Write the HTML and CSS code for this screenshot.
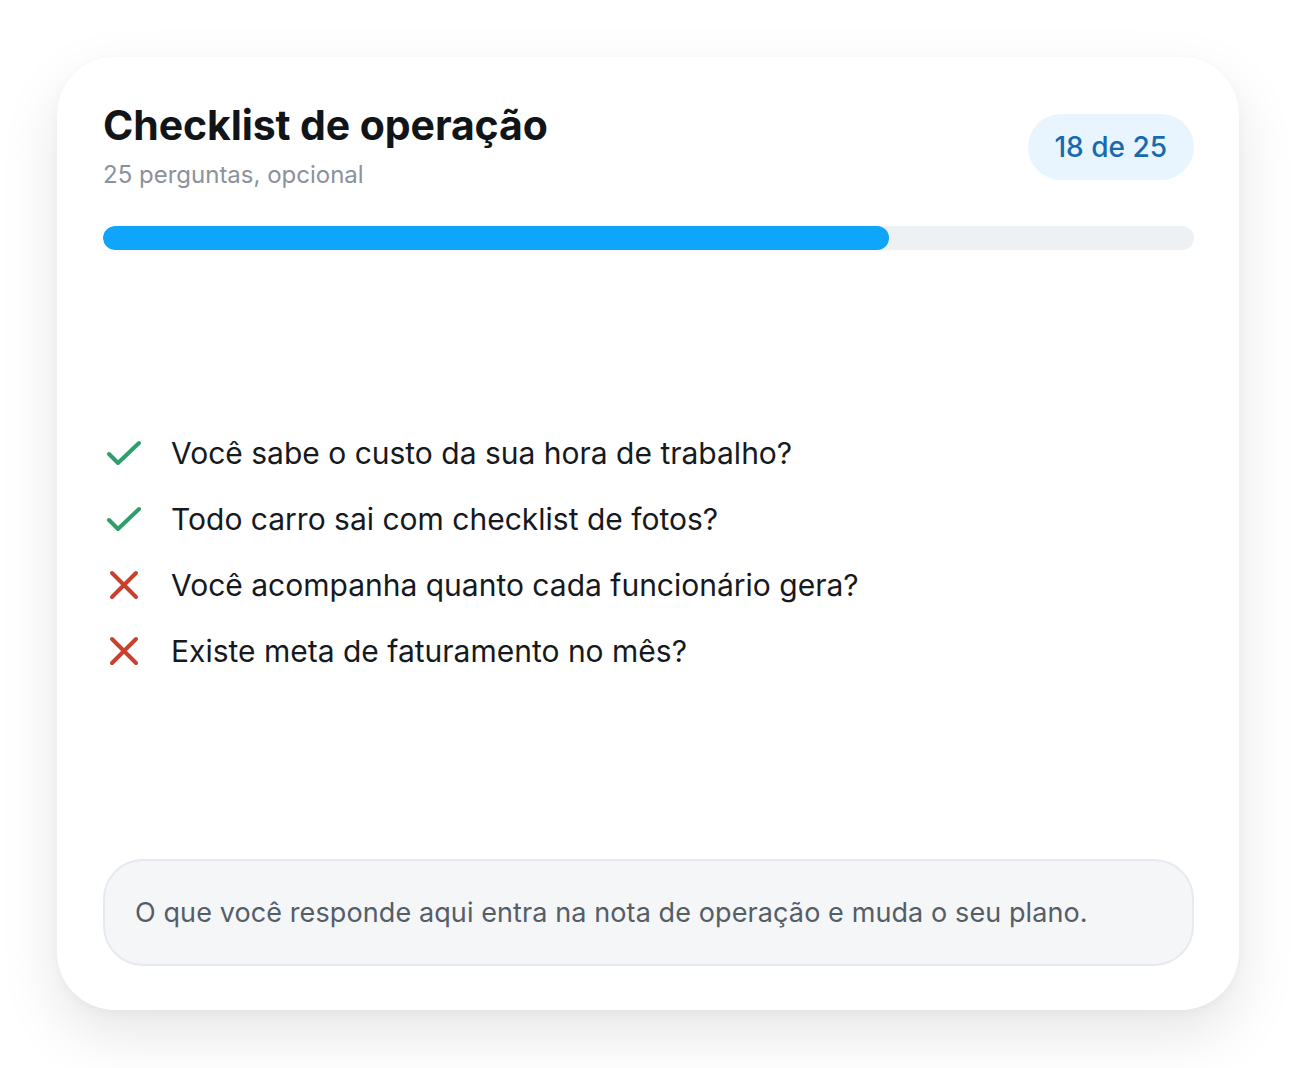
FILE: index.html
```html
<!DOCTYPE html>
<html lang="pt-BR">
<head>
<meta charset="utf-8">
<title>Checklist de operação</title>
<link rel="stylesheet" href="styles.css">
</head>
<body>
<div class="page">
  <section class="card">
    <header class="card-head">
      <div class="titles">
        <h1 class="title">Checklist de operação</h1>
        <p class="subtitle">25 perguntas, opcional</p>
      </div>
      <span class="badge">18 de 25</span>
    </header>
    <div class="progress"><div class="progress-fill" style="width:72%"></div></div>
    <ul class="list">
      <li class="item">
        <svg class="icon" viewBox="0 0 36 36"><path class="ok" d="M3 19 L12 28 L33 8"/></svg>
        <span>Você sabe o custo da sua hora de trabalho?</span>
      </li>
      <li class="item">
        <svg class="icon" viewBox="0 0 36 36"><path class="ok" d="M3 19 L12 28 L33 8"/></svg>
        <span>Todo carro sai com checklist de fotos?</span>
      </li>
      <li class="item">
        <svg class="icon" viewBox="0 0 36 36"><path class="no" d="M6 6 L30 30 M30 6 L6 30"/></svg>
        <span>Você acompanha quanto cada funcionário gera?</span>
      </li>
      <li class="item">
        <svg class="icon" viewBox="0 0 36 36"><path class="no" d="M6 6 L30 30 M30 6 L6 30"/></svg>
        <span>Existe meta de faturamento no mês?</span>
      </li>
    </ul>
    <div class="note">O que você responde aqui entra na nota de operação e muda o seu plano.</div>
  </section>
</div>
</body>
</html>
```
FILE: styles.css
```css
* { box-sizing: border-box; }
html, body { margin: 0; padding: 0; }
body {
  background: #ffffff;
  font-family: Inter, "Noto Sans", sans-serif;
  color: #16191d;
}
.page {
  padding: 57px 57px 58px 57px;
}
.card {
  width: 1182px;
  height: 953px;
  background: #ffffff;
  border-radius: 58px;
  box-shadow: 0 24px 60px rgba(0, 0, 0, 0.10), 0 4px 12px rgba(0,0,0,0.03);
  padding: 44px 45px 44px 46px;
  display: flex;
  flex-direction: column;
}
.card-head {
  display: flex;
  justify-content: space-between;
  align-items: flex-start;
}
.title {
  margin: 0;
  font-size: 41px;
  font-weight: 700;
  line-height: 48px;
  letter-spacing: -0.1px;
  color: #121518;
}
.subtitle {
  margin: 10px 0 0 0;
  font-size: 24px;
  line-height: 32px;
  color: #8b929b;
}
.badge {
  margin-top: 13px;
  height: 66px;
  padding: 0 27px;
  border-radius: 33px;
  background: #e9f5fe;
  color: #1769b0;
  font-size: 28px;
  font-weight: 500;
  display: flex;
  align-items: center;
}
.progress {
  margin-top: 35px;
  height: 24px;
  border-radius: 12px;
  background: #eef1f4;
  overflow: hidden;
}
.progress-fill {
  height: 100%;
  border-radius: 12px;
  background: #0ea5fb;
}
.list {
  list-style: none;
  margin: 0;
  padding: 0 0 6px 0;
  flex: 1;
  display: flex;
  flex-direction: column;
  justify-content: center;
  gap: 26px;
}
.item {
  display: flex;
  align-items: center;
  gap: 29px;
  font-size: 30px;
  line-height: 40px;
  color: #16191d;
}
.icon {
  width: 36px;
  height: 36px;
  margin-left: 3px;
  flex: none;
}
.icon path {
  fill: none;
  stroke-width: 4;
  stroke-linecap: round;
  stroke-linejoin: round;
}
.icon .ok { stroke: #2e9e6b; }
.icon .no { stroke: #c9402f; }
.note {
  height: 107px;
  border: 2px solid #e6eaee;
  border-radius: 40px;
  background: #f4f6f8;
  padding: 0 30px;
  display: flex;
  align-items: center;
  font-size: 27px;
  letter-spacing: 0.1px;
  color: #555d67;
}
```
